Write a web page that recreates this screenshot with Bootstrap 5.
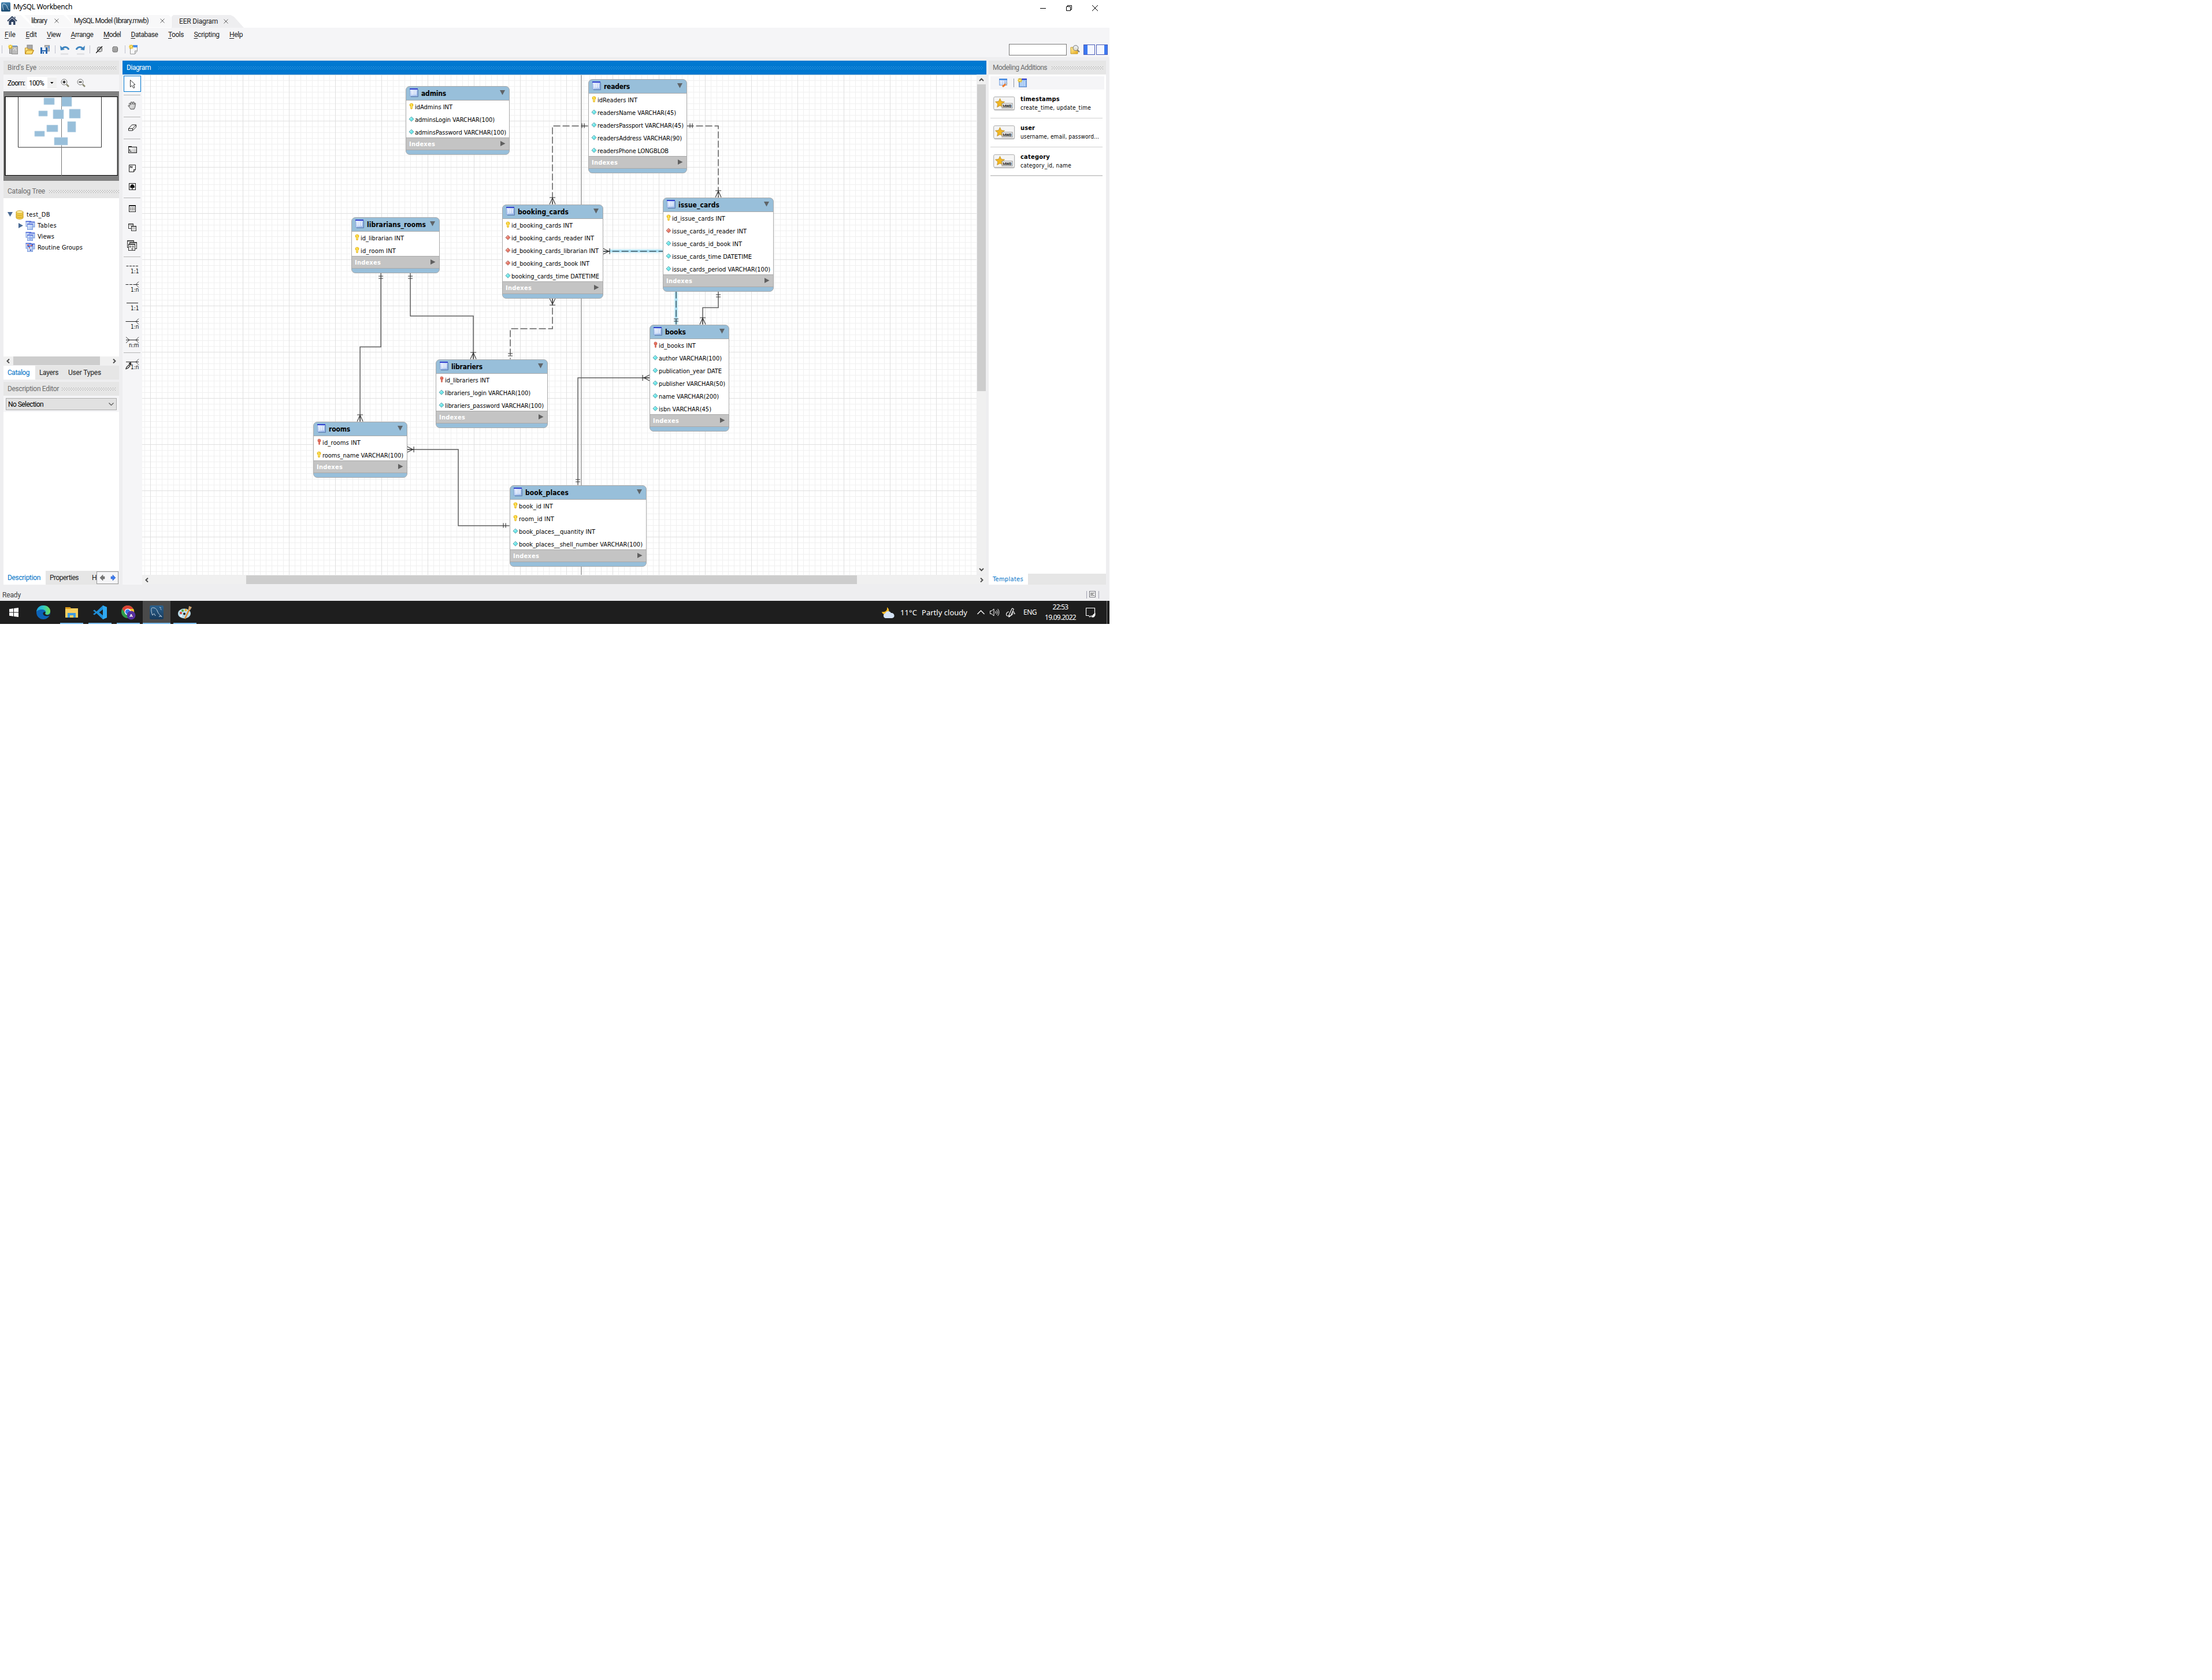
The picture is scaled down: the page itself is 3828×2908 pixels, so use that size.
<!DOCTYPE html>
<html lang="en">
<head>
<meta charset="utf-8">
<title>MySQL Workbench</title>
<link href="https://cdn.jsdelivr.net/npm/bootstrap@5.3.0/dist/css/bootstrap.min.css" rel="stylesheet">
<style>
body{background:#fff;font:12px/16px Roboto,"Liberation Sans",sans-serif;color:#1c1c1c;overflow:hidden}
svg{display:block;flex:none}
.wb{width:1920px;height:1080px;background:#eeeef0}
[data-w]{display:inline-block;white-space:nowrap;flex:none}
.tah{font-family:"DejaVu Sans Condensed","DejaVu Sans",sans-serif;font-size:11px}
/* window frame */
.titlebar{height:26px;padding:0 20px 2px 2px}
.titlebar .ttl{font:12px/16px "Noto Sans",sans-serif;color:#000;margin-left:5px}
.wbtns{gap:35px;padding-top:4px}
.tabstrip{height:22px;background:#fff}
.wtab{background:#f8f8f9;height:21px;padding-bottom:1px}
.wt-home{width:57px;padding-left:12px;clip-path:polygon(0 0,36px 0,57px 100%,0 100%)}
.wt-lib{width:89px;margin-left:-15px;padding-left:12px;clip-path:polygon(0 0,68px 0,89px 100%,19px 100%);gap:13px}
.wt-model{width:181px;margin-left:-16px;padding-left:13px;gap:20px;clip-path:polygon(0 0,177px 0,181px 4px,181px 100%,15px 100%)}
.wt-eer{width:125px;height:22px;margin-left:1px;padding-left:13px;gap:10px;background:#eeeef0;clip-path:polygon(0 3px,3px 0,102px 0,108px 3px,125px 100%,0 100%)}
.menurow{height:25px;background:#f5f5f7;padding:0 0 1px 8px;gap:17.5px}
.menurow u{text-underline-offset:2px}
.toolrow{height:26px;background:#f5f5f7;padding:0 3px}
.grip{width:1px;height:14px;background:repeating-linear-gradient(#8c8fa5 0 1px,transparent 1px 2px)}
.findbox{width:100px;height:20px;border:1px solid #7a7a7a;background:#fff;padding:0;border-radius:0}
.t-new{margin-left:10px}.t-open{margin-left:10px}.t-save{margin-left:9px}.t-undo{margin-left:8px}.t-redo{margin-left:11px}
.t-grid{margin-left:10px}.t-snap{margin-left:16px}.t-page{margin-left:6px}
/* docked panels */
.workrow{height:907px;margin-top:6px;padding-left:6px}
.side{width:200px}
.dockhead{height:24px;background:#e6e6e6;color:#6d6d6d;padding:0 5px 0 7px;gap:5px}
.dots{height:5px;flex:1;background:radial-gradient(circle at .5px .5px,#999 .7px,transparent .8px) 0 0/4px 4px,radial-gradient(circle at .5px .5px,#999 .7px,transparent .8px) 2px 2px/4px 4px}
.blue .dots{background:radial-gradient(circle at .5px .5px,#4ea6e6 .7px,transparent .8px) 0 0/4px 4px,radial-gradient(circle at .5px .5px,#4ea6e6 .7px,transparent .8px) 2px 2px/4px 4px}
.dockhead.blue{background:#0078d0;color:#fff;gap:13px}
.zoomrow{height:29px;background:#f5f5f7;padding-left:7px;color:#000}
.zoombox{width:51px;height:21px;background:#fff;margin-left:4px;padding-left:3px}
.zoombtn{width:16px;height:19px;background:#f0f0f0}
.birds{height:155px;background:#808080}
.tree{height:274px;background:#fff;padding:19px 0 0 7px;color:#000}
.tree>div{height:19px}
.tree span{padding-top:1px}
.dtab{height:24px;background:#e6e6e6}
.dtab .on{background:#fff;color:#0072c6;height:100%}
.hs{height:15px;background:#f0f0f0}
.selrow{height:28px;background:#f5f5f7;padding:4px 4px 0}
.selbox{height:21px;border:1px solid #adadad;background:#e1e1e1;padding:0 4px 0 3px;color:#000}
.descarea{height:275px;background:#fff}
.pager{width:38px;height:22px;border:1px solid #999;background:#f5f5f7;gap:9px;margin-right:1px}
.centerpane{width:1495px;margin-left:6px}
.palette{width:34px;height:883px;background:#f5f5f7}
.canvas{width:1444px;height:866px;border-top:1px solid #b8c8d4;background-color:#fff;
 background-image:linear-gradient(90deg,#e0e0e0 1px,transparent 1px),linear-gradient(#e0e0e0 1px,transparent 1px),linear-gradient(90deg,#f0f0f0 1px,transparent 1px),linear-gradient(#f0f0f0 1px,transparent 1px);
 background-size:80px 80px,80px 80px,10px 10px,10px 10px;background-position:14px 0,0 79px,4px 0,0 9px}
.vs{width:15px;height:865px;background:#f0f0f0;margin-left:1px}
.vs i{display:block;width:15px;height:531px;background:#cdcdcd}
.rightpane{width:203px;height:907px;margin-left:4px;background:#fff}
.tplbar{height:23px;margin:3px 3px 0;background:#f5f5f7;padding-left:14px;gap:9px}
.tpl{height:50px;margin:0 6px 0 3px;padding-left:5px;border-bottom:1px solid #d0d0d0;gap:9px;color:#000}
.tpl b{font-size:11px;line-height:15px}
.tpl span{font-size:10px;line-height:16px}
/* diagram nodes */
.node{position:absolute;border:1px solid #a9a9a9;border-radius:7px;background:#98bfda;overflow:hidden;color:#000}
.node header{height:24px;padding:0 6px 1px 6px;border-bottom:1px solid #a9a9a9}
.node header b{font-size:12px;margin:2px 0 0 5px}
.node header svg{margin-top:-1px}
.node ul{background:#fff;height:auto;margin:0 -1px;padding:0 0 0 4px;list-style:none;border:solid #808080;border-width:0 1px}
.node li{height:22px;padding-top:2px;display:flex;align-items:center;margin-bottom:0}
.node li:last-child{height:20px;padding-top:4px}
.node li svg{margin:-5px 1px 0 0}
.node footer{height:22px;background:#c4c4c4;border:solid #a9a9a9;border-width:1px 0;padding:1px 6px 0 5px;color:#fff;font-weight:bold}
.node footer svg{margin-top:-1px}
#n-admins{left:456px;top:19px;width:180px}
#n-lr{left:362px;top:246px;width:153px}
#n-bc{left:623px;top:224px;width:175px}
#n-rd{left:772px;top:7px;width:171px}
#n-ic{left:901px;top:212px;width:192px}
#n-lb{left:508px;top:492px;width:194px}
#n-rm{left:296px;top:600px;width:163px}
#n-bk{left:878px;top:432px;width:138px}
#n-bp{left:636px;top:710px;width:237px}
.node::after{content:"";display:block;height:7px}
.wires{position:absolute;left:0;top:0}
/* status and taskbar */
.statusrow{height:28px;padding:6px 17px 0 4px;color:#444}
.taskbar{height:40px;background:#1e1e1e;color:#fff;font-family:"Noto Sans",sans-serif}
.app-b{height:40px;width:40px;border-bottom:2px solid #76b9ed;padding-top:1px}
.app-n{border-color:transparent}
.app-on{width:48px;background:#4a4a4a}
</style>
<script src="https://cdn.jsdelivr.net/npm/bootstrap@5.3.0/dist/js/bootstrap.bundle.min.js"></script>
</head>
<body>
<svg width="0" height="0" class="position-absolute">
<defs>
<linearGradient id="gt" x2="1" y2="1"><stop stop-color="#e8f0ff"/><stop offset="1" stop-color="#a0bcec"/></linearGradient>
<linearGradient id="gy" x2="1" y2="1"><stop stop-color="#fff0a0"/><stop offset="1" stop-color="#e8a818"/></linearGradient>
<linearGradient id="gg" x2="1" y2="1"><stop stop-color="#fff"/><stop offset="1" stop-color="#b8b8b8"/></linearGradient>
<linearGradient id="gb" x2="0" y2="1"><stop stop-color="#4482ae"/><stop offset="1" stop-color="#1c4a70"/></linearGradient>
<linearGradient id="gd" x2="0" y2="1"><stop stop-color="#2c608c"/><stop offset="1" stop-color="#173a5c"/></linearGradient>
<linearGradient id="ge" x2="1" y2="0"><stop stop-color="#1a9fe0"/><stop offset=".5" stop-color="#30c8c0"/><stop offset="1" stop-color="#70e050"/></linearGradient>
<symbol id="i-tbl" viewBox="0 0 15 15"><path d="M2 14.500h12.500V2" stroke="#5d7fae" fill="none"/><rect x=".5" y=".5" width="13" height="13" fill="url(#gt)" stroke="#8aa8dc"/><path d="M0 1h14" stroke="#2f3fd0" stroke-width="2"/><path d="M4.500 4v7M7.500 4v7M10.500 4v7" stroke="#fff" stroke-width="1.200"/></symbol>
<symbol id="i-key" viewBox="0 0 9 12"><path d="M3 1h3l1.500 1.500v2.500L6 6.500V10l-1.500 1L3 10V6.500L1.500 5V2.500z" fill="#f5cb23" stroke="#d9a514" stroke-width=".5"/><path d="M3 2.500h1.500V9" stroke="#fff3a0" fill="none"/></symbol>
<symbol id="i-rkey" viewBox="0 0 9 12"><path d="M3.500 1h2.500l1.500 1.500v2.500L6 6.500V10l-1 1-1-1V6.500L2.500 5V2.500z" fill="#e06a58" stroke="#b84838" stroke-width=".5"/><path d="M4 2.500h1" stroke="#ffc0b0"/></symbol>
<symbol id="i-dia" viewBox="0 0 9 12"><path d="M4.500 2.200 8.500 6.200l-4 4-4-4z" fill="#6fe8ea" stroke="#5a9ea8"/><path d="M4.500 4 2.500 6" stroke="#e0ffff"/></symbol>
<symbol id="i-red" viewBox="0 0 9 12"><path d="M4.500 2.200 8.500 6.200l-4 4-4-4z" fill="#e87868" stroke="#a8746c"/><path d="M4.500 4 2.500 6" stroke="#ffd8d0"/></symbol>
<symbol id="i-dn" viewBox="0 0 10 9"><path d="M0 0h9L4.500 8.500z" fill="#5f6468"/></symbol>
<symbol id="i-rt" viewBox="0 0 9 10"><path d="M0 0v9L8.500 4.500z" fill="#606060"/></symbol>
<symbol id="i-x" viewBox="0 0 8 8"><path d="M.5.5l7 7M7.500.5l-7 7" stroke="#606060" fill="none"/></symbol>
<symbol id="i-star" viewBox="0 0 8 8"><path d="M4 0v8M0 4h8M1 1l6 6M7 1 1 7" stroke="#eec21c" stroke-width="1.300"/><rect x="3" y="3" width="2" height="2" fill="#fff8c0"/></symbol>
<symbol id="i-stack" viewBox="0 0 17 17"><g stroke="#7f9ddc" fill="url(#gt)"><rect x="1" y="1" width="9" height="9"/><rect x="7" y="2" width="9" height="9"/><rect x="3.500" y="5.500" width="9" height="10"/></g><path d="M.5 1.500h9M7 2.500h9M3 6h10" stroke="#4a63d8" stroke-width="1.500"/></symbol>
<symbol id="i-mwb" viewBox="0 0 38 25"><rect x="1" y="1.500" width="36" height="23" rx="2.500" fill="#ccc"/><rect x=".7" y=".7" width="36" height="22" rx="2" fill="#f5f5f5" stroke="#a8a8a8"/><path d="M11.500 3.500l2.300 5 5.700.7-4.200 3.700 1 5.600-4.800-2.700-4.800 2.700 1-5.600-4.200-3.700 5.700-.7z" fill="#f2b822" stroke="#b8892c" stroke-width=".8"/><rect x="15" y="12" width="18" height="8" fill="#fff" stroke="#888"/><text x="16.200" y="18.800" font-family="Roboto,sans-serif" font-weight="900" font-size="7" textLength="15.500" fill="#444">MWB</text></symbol>
<filter id="soft" filterUnits="userSpaceOnUse" x="1000" y="400" width="250" height="200"><feGaussianBlur stdDeviation="1"/></filter>
</defs>
</svg>

<div class="wb d-flex flex-column">
<div class="titlebar bg-white d-flex align-items-center">
 <svg width="16" height="16" viewBox="0 0 24 24"><rect width="24" height="24" rx="2.500" fill="url(#gb)"/><path d="M6 20C4 13 2 4 6 4c4 0 7 2 9 6 1 3 1 5 3 7l3 3" fill="none" stroke="#d6e6f0" stroke-width="1.400"/></svg><span class="ttl" data-w="102">MySQL Workbench</span>
 <div class="wbtns d-flex ms-auto">
  <svg width="10" height="10"><path d="M0 5.500h10" stroke="#000"/></svg>
  <svg width="10" height="10" fill="none" stroke="#000"><path d="M.5 2.500h7v7h-7zM2.500 2.500v-2h7v7h-2"/></svg>
  <svg width="10" height="10"><path d="M0 0l10 10M10 0 0 10" stroke="#000"/></svg>
 </div>
</div>
<div class="tabstrip d-flex">
 <div class="wtab wt-home d-flex align-items-center"><svg width="18" height="16"><path d="M1 8.500 9 1l8 7.500" fill="none" stroke="#3a4a66" stroke-width="2.200"/><path d="M12.500 1h2v4M3.500 8.500 9 3.500l5.500 5V15H11v-5H7.500v5h-4z" fill="#2f4262"/></svg></div>
 <div class="wtab wt-lib d-flex align-items-center"><span data-w="27">library</span><svg width="8" height="8"><use href="#i-x"/></svg></div>
 <div class="wtab wt-model d-flex align-items-center"><span data-w="129">MySQL Model (library.mwb)</span><svg width="8" height="8"><use href="#i-x"/></svg></div>
 <div class="wtab wt-eer d-flex align-items-center"><span data-w="67">EER Diagram</span><svg width="8" height="8"><use href="#i-x"/></svg></div>
</div>
<div class="menurow d-flex align-items-center">
 <span data-w="19"><u>F</u>ile</span><span data-w="19"><u>E</u>dit</span><span data-w="24"><u>V</u>iew</span><span data-w="39"><u>A</u>rrange</span><span data-w="30"><u>M</u>odel</span><span data-w="47"><u>D</u>atabase</span><span data-w="27"><u>T</u>ools</span><span data-w="44"><u>S</u>cripting</span><span data-w="23"><u>H</u>elp</span>
</div>
<div class="toolrow d-flex align-items-center">
 <div class="grip"></div>
 <svg width="18" height="18" class="t-new"><rect x="7" y="2" width="9" height="12" fill="#4a90e0"/><rect x="2.500" y="6.500" width="10" height="9" fill="#b8b8b8" stroke="#888"/><rect x="6.500" y="3.500" width="10" height="13" fill="#bcbcbc" stroke="#909090"/><path d="M9 10l3-4 2 5" stroke="#eee" fill="none"/><svg width="8" height="8"><use href="#i-star"/></svg></svg>
 <svg width="18" height="18" class="t-open"><rect x="5" y="1" width="9" height="8" fill="#a8a8a8" stroke="#888"/><path d="M1.500 16V6h4l1 2h7v2h3l-3 6.500z" fill="url(#gy)" stroke="#c08c1c"/><path d="M4 10h12l-3 6.500H2z" fill="#fbdc6c" stroke="#c08c1c"/></svg>
 <svg width="18" height="18" class="t-save"><rect x="8.500" y="1.500" width="8" height="10" fill="#b8b8b8" stroke="#909090"/><path d="M14 3h3v5" fill="#4a90e0"/><path d="M1 5h11l1 1v10H1z" fill="#2463ae"/><rect x="4" y="5" width="6" height="5" fill="#e4ecf6"/><rect x="4" y="12" width="6" height="4" fill="#fff"/><rect x="5" y="13" width="2" height="3" fill="#2463ae"/></svg>
 <div class="grip ms-2"></div>
 <svg width="16" height="18" class="t-undo"><path d="M4 7c3-4 9-3 11 2" fill="none" stroke="#3d84bf" stroke-width="3"/><path d="M0 2l1 8 7-1z" fill="#3d84bf"/><path d="M1 16.500h13" stroke="#dcdcdf" stroke-width="2"/></svg>
 <svg width="16" height="18" class="t-redo"><path d="M12 7C9 3 3 4 1 9" fill="none" stroke="#3d84bf" stroke-width="3"/><path d="M16 2l-1 8-7-1z" fill="#3d84bf"/><path d="M2 16.500h13" stroke="#dcdcdf" stroke-width="2"/></svg>
 <div class="grip ms-2"></div>
 <svg width="12" height="12" class="t-grid"><rect x="2.500" y="1.500" width="8" height="8" rx="2" fill="#ccc" stroke="#222" stroke-dasharray="1.500 .7"/><path d="M0 12 11 0" stroke="#111" stroke-width="1.300"/></svg>
 <svg width="11" height="12" class="t-snap"><rect x="1" y="1" width="8.500" height="9" rx="2" fill="#bbb" stroke="#222" stroke-dasharray="1.500 .7"/><path d="M3 4h5M3 6h5M3 8h5" stroke="#555" stroke-dasharray="1 1"/></svg>
 <div class="grip" style="margin-left:11px"></div>
 <svg width="16" height="18" class="t-page"><path d="M2.500 2.500h12v9l-4 5h-8z" fill="#f7f7f8" stroke="#999"/><path d="M6 1h9v4H2V4h4z" fill="#4a8ee8"/><path d="M14.500 11h-4v5" fill="#ddd" stroke="#999"/><svg width="8" height="8"><use href="#i-star"/></svg></svg>
 <input class="findbox ms-auto" aria-label="Search">
 <svg width="18" height="18" style="margin-left:5px"><path d="M2 16V5h5l1 2h6v9z" fill="url(#gy)" stroke="#c59a25"/><circle cx="10.500" cy="6" r="4.500" fill="#e4e8ea" fill-opacity=".85" stroke="#777"/><path d="M13.500 9.500 17 13" stroke="#777" stroke-width="2"/></svg>
 <svg width="42" height="18" style="margin-left:6px"><g fill="#f5f7ff" stroke="#4a5cb8"><rect x=".5" y=".5" width="19" height="17"/><rect x="22.500" y=".5" width="19" height="17"/></g><path d="M1 1h6v16H1zM36 1h5v16h-5z" fill="#3c78f0"/></svg>
</div>

<div class="workrow d-flex align-items-start">
<aside class="side d-flex flex-column">
 <div class="dockhead d-flex align-items-center"><span data-w="50">Bird's Eye</span><div class="dots"></div></div>
 <div class="zoomrow d-flex align-items-center"><span data-w="30">Zoom:</span>
  <div class="zoombox d-flex align-items-center"><span data-w="26">100%</span><div class="zoombtn ms-auto d-flex align-items-center justify-content-center"><svg width="6" height="4"><path d="M0 0h5.500L2.800 3z" fill="#000"/></svg></div></div>
  <svg width="16" height="16" style="margin-left:7px" fill="none"><circle cx="6" cy="6" r="5" fill="#f2f2f2" stroke="#808080"/><path d="M10 10l4 4" stroke="#8a8a70" stroke-width="2.500"/><path d="M3.500 6h5M6 3.500v5" stroke="#000" stroke-width="1.500"/></svg>
  <svg width="16" height="16" style="margin-left:12px" fill="none"><circle cx="6" cy="6" r="5" fill="#f2f2f2" stroke="#808080"/><path d="M10 10l4 4" stroke="#8a8a70" stroke-width="2.500"/><path d="M3.500 6h5" stroke="#000" stroke-width="1.500"/></svg>
 </div>
 <svg class="birds" width="200" height="155"><rect x="2.500" y="9.500" width="195" height="136" fill="#fff" stroke="#000"/><path d="M197 10v135M3.500 10v135" stroke="#555"/><path d="M25.500 10v87h144V10" fill="none" stroke="#333"/><path d="M100.500 10v136" stroke="#777"/><g fill="#98bfda" stroke="#b8d2e4" stroke-width=".8"><path d="M70 11.500h18v11.500H70zM101 10h17v16h-17zM61 34h15v9H61zM86 32h18v15.500H86zM114 31h19v15.500h-19zM111 52.500h14v18h-14zM75 58.500h19v11.500H75zM54 69h17v9H54zM88 80h23v13H88z"/></g></svg>
 <div class="dockhead d-flex align-items-center pe-0" style="height:30px;gap:7px;padding-top:6px"><span data-w="65">Catalog Tree</span><div class="dots"></div></div>
 <div class="tree tah">
  <div class="d-flex align-items-center"><svg width="10" height="9"><path d="M0 0h9L4.500 8z" fill="#4a6a95"/></svg><svg width="14" height="16" class="ms-1"><path d="M1 3v10c0 3 12 3 12 0V3z" fill="#f4d04a" stroke="#c89c24"/><ellipse cx="7" cy="3" rx="6" ry="2.300" fill="#fff0a0" stroke="#c89c24"/><path d="M1 7c1 2.500 11 2.500 12 0M1 10.500c1 2.500 11 2.500 12 0" fill="none" stroke="#c89c24"/></svg><span data-w="41" style="margin-left:5px">test_DB</span></div>
  <div class="d-flex align-items-center" style="padding-left:19px"><svg width="8" height="9"><path d="M0 0v9l8-4.500z" fill="#4a6a95"/></svg><svg width="17" height="17" class="ms-1"><use href="#i-stack"/></svg><span data-w="33" style="margin-left:4px">Tables</span></div>
  <div class="d-flex align-items-center" style="padding-left:31px"><svg width="17" height="17"><use href="#i-stack"/><circle cx="8" cy="11" r="2" fill="none" stroke="#6a8ae8"/></svg><span data-w="29" style="margin-left:4px">Views</span></div>
  <div class="d-flex align-items-center" style="padding-left:31px"><svg width="17" height="17"><use href="#i-stack"/><path d="M3 4h3M9 5h3M6 9h2" stroke="#d86858" stroke-width="2"/><path d="M5 7h2M11 4h2M8 13h2" stroke="#3a5ac0" stroke-width="2"/></svg><span data-w="78" style="margin-left:4px">Routine Groups</span></div>
 </div>
 <div class="hs d-flex align-items-center" style="padding:0 5px 0 5px"><svg width="6" height="8"><path d="M5 .5 1.500 4 5 7.500" fill="none" stroke="#505050" stroke-width="2"/></svg><div style="width:150px;height:15px;margin-left:6px;background:#cdcdcd"></div><svg width="6" height="8" class="ms-auto"><path d="M1 .5 4.500 4 1 7.500" fill="none" stroke="#505050" stroke-width="2"/></svg></div>
 <div class="dtab d-flex align-items-center" style="margin-top:1px"><div class="on d-flex align-items-center" style="width:55px;padding-left:7px"><span data-w="38">Catalog</span></div><span data-w="33" style="margin-left:7px">Layers</span><span data-w="57" style="margin-left:17px">User Types</span></div>
 <div class="dockhead d-flex align-items-center" style="margin-top:4px"><span data-w="89">Description Editor</span><div class="dots"></div></div>
 <div class="selrow"><div class="selbox d-flex align-items-center justify-content-between"><span data-w="61">No Selection</span><svg width="9" height="6"><path d="M.5.5l4 4 4-4" fill="none" stroke="#555" stroke-width="1.200"/></svg></div></div>
 <div class="descarea"></div>
 <div class="dtab d-flex align-items-center"><div class="on d-flex align-items-center" style="width:73px;padding-left:7px"><span data-w="57">Description</span></div><span data-w="50" style="margin-left:7px">Properties</span><span data-w="8" style="margin-left:23px">H</span>
  <div class="pager d-flex align-items-center justify-content-center ms-auto"><svg width="9" height="12"><path d="M0 6l5-5v3h3v4H5v3z" fill="#787878" stroke="#555" stroke-width=".5"/></svg><svg width="9" height="12"><path d="M9 6 4 1v3H1v4h3v3z" fill="#3c7cf0" stroke="#2850b0" stroke-width=".5"/></svg></div></div>
</aside>

<main class="centerpane">
 <div class="dockhead blue d-flex align-items-center"><span data-w="42">Diagram</span><div class="dots"></div></div>
 <div class="d-flex">
  <svg class="palette" width="34" height="883" fill="none">
   <rect x="2.500" y="2.500" width="29" height="27" fill="#fdfdfe" stroke="#0078d0"/>
   <path d="M2 35.500h29M2 73.500h29M2 111.500h29M2 213.500h29M2 315.500h29M2 481.500h29" stroke="#b5b5b5"/>
   <path d="M13.500 9.500v12l3-2.500 2.500 4.500 2-1-2-4.500 3-.5z" fill="#fff" stroke="#333"/>
   <path d="M14 60c-1-3-5-5-4-6.500l2.500 1.500-1-5 1.500-.8 1.500 3.500v-5h2l.7 4 1-4.300 1.800.3v4.500l1.300-3 1.400.8-1 6.500-1.700 3.500z" fill="url(#gg)" stroke="#444" stroke-width=".9"/>
   <path d="M10.500 93.500l6-6.500h7l-6 6.500zM10.500 93.500v3.500h7v-3.500M17.500 97l6-6v-4" fill="#f4f4f4" stroke="#222"/>
   <rect x="10.500" y="125.500" width="14" height="10" fill="url(#gg)" stroke="#222"/><path d="M10 124h6v2h-6z" fill="#222"/><path d="M12.500 129v4h3" stroke="#222"/>
   <path d="M11.500 156.500h11v8l-3 4h-8z" fill="#f4f4f4" stroke="#222"/><path d="M22.500 164.500h-3v4M13.500 162v-4l3 4v-4" stroke="#222"/>
   <rect x="11.500" y="188.500" width="11" height="11" fill="#eee" stroke="#222"/><path d="M17 190l2.500 1.500 1.500 3-1 1.500h-6l-1-1.500 1.500-3zM16.500 195h1v3.500h-1z" fill="#111" stroke="#111" stroke-width=".4"/>
   <rect x="11.500" y="226.500" width="11" height="11" fill="#f4f4f4" stroke="#222"/><path d="M11 227.500h12" stroke="#222"/><path d="M13 230.500h8M13 232.500h8M13 234.500h8" stroke="#444" stroke-dasharray="2 1"/>
   <g fill="#f4f4f4" stroke="#333"><rect x="10.500" y="258.500" width="8" height="8"/><rect x="15.500" y="262.500" width="8" height="8"/></g><path d="M10 259h9M15 263h9" stroke="#222"/><path d="M12 261.500h5M17 265.500h5M17 267.500h5" stroke="#555" stroke-dasharray="1 1"/>
   <g fill="#eee" stroke="#333"><rect x="8.500" y="287.500" width="11" height="12"/><rect x="12.500" y="290.500" width="12" height="11"/><rect x="10.500" y="293.500" width="11" height="11"/></g><path d="M8 288h12M12 291h13M10 294h12" stroke="#333" stroke-width="1.500"/><path d="M12.500 297h2v2h-2zM17 297h2v2h-2zM16 301h2v2h-2z" stroke="#444" stroke-width=".8"/>
   <g stroke="#222"><path d="M6.500 331.500H27" stroke-dasharray="4 1.500"/><path d="M5.500 363.500H22" stroke-dasharray="5 1.500"/><path d="M7 395.500h20M5.500 427.500H28M6 459.500h22M6 497.500h22"/><path d="M28 358.500l-5 5 5 5M22 363.500h6M28 422.500l-5 5 5 5M28 454.500l-5 5 5 5M6 454.500l6 5-6 5M28 492.500l-5 5 5 5" stroke-width=".9"/><path d="M6 509.500l1-3 4-4 2 2-4 4zM12 500l3 3" stroke-width="1.200"/><path d="M11 500l3-1.500 1 1-1.500 3.500z" fill="#222"/></g>
   <g fill="#111" font-family="DejaVu Sans Condensed,sans-serif" font-size="10" text-anchor="end"><text x="28.500" y="344">1:1</text><text x="28.500" y="376">1:n</text><text x="28.500" y="408">1:1</text><text x="28.500" y="440">1:n</text><text x="28.500" y="472">n:m</text><text x="28.500" y="510">1:n</text></g>
  </svg>
  <div>
   <div class="d-flex">
    <div class="canvas position-relative">
     <svg class="wires" width="1444" height="865" fill="none">
      <path d="M760 0v865" stroke="#b4b4b4" stroke-width="2"/>
      <g transform="translate(-246.400 -130.500)">
       <path d="M1055 435H1148M1170.500 505V562" stroke="#a4dff5" stroke-width="5" filter="url(#soft)"/>
       <g stroke="#5f5f5f" stroke-width="1.500">
        <path d="M659.500 473V601H623.500V730M710.500 473V547.500H819.500V622M705 778.500H793.500V910.500H882M1124.500 654.500H1000.500V840M1243.500 505V533H1216.500V562"/>
        <path stroke-dasharray="12 4" d="M1018 218.500H956.500V354M1189 218.500H1243.500V342M956.500 517V569.500H883.500V622"/>
        <path stroke-dasharray="12 4" stroke="#3c5560" d="M1044 435.500H1148M1170.500 505V562"/>
       </g>
       <g stroke="#333" stroke-width="1.100">
        <path d="M655.500 478.500h8M655.500 482.500h8M706.500 478.500h8M706.500 482.500h8M1239.500 510.500h8M1239.500 514.500h8M879.500 612.500h8M879.500 616.500h8M996.500 830.500h8M996.500 834.500h8M1166.500 552.500h8M1166.500 556.500h8M1007.500 214v8M1011.500 214v8M1194.500 214v8M1198.500 214v8M871.500 906v8M875.500 906v8"/>
        <path d="M618.500 718.500h10M623.500 718.500V730M618.500 730l5-11 5 11M814.500 610.500h10M819.500 610.500V622M814.500 622l5-11 5 11M951.500 342.500h10M956.500 342.500V354M951.500 354l5-11 5 11M1238.500 330.500h10M1243.500 330.500V342M1238.500 342l5-11 5 11M1211.500 550.500h10M1216.500 550.500V562M1211.500 562l5-11 5 11M951.500 528.500h10M956.500 517v11M951.500 517l5 10 5-10M716.500 773.500v10M705 778.500h11M705 773.500l10 5-10 5M1055.500 430.500v10M1044 435.500h11M1044 430.500l10 5-10 5M1112.500 649.500v10M1124 654.500h-12M1124.500 649.500l-10 5 10 5"/>
       </g>
      </g>
     </svg>
     <section class="node tah" id="n-admins"><header class="d-flex align-items-center"><svg width="15" height="15"><use href="#i-tbl"/></svg><b data-w="43">admins</b><svg width="10" height="9" class="ms-auto"><use href="#i-dn"/></svg></header>
      <ul><li><svg width="10" height="12"><use href="#i-key"/></svg><span data-w="65">idAdmins INT</span></li><li><svg width="10" height="12"><use href="#i-dia"/></svg><span data-w="138">adminsLogin VARCHAR(100)</span></li><li><svg width="10" height="12"><use href="#i-dia"/></svg><span data-w="158">adminsPassword VARCHAR(100)</span></li></ul>
      <footer class="d-flex align-items-center justify-content-between"><span data-w="45">Indexes</span><svg width="9" height="10"><use href="#i-rt"/></svg></footer></section>
     <section class="node tah" id="n-lr"><header class="d-flex align-items-center"><svg width="15" height="15"><use href="#i-tbl"/></svg><b data-w="102">librarians_rooms</b><svg width="10" height="9" class="ms-auto"><use href="#i-dn"/></svg></header>
      <ul><li><svg width="10" height="12"><use href="#i-key"/></svg><span data-w="75">id_librarian INT</span></li><li><svg width="10" height="12"><use href="#i-key"/></svg><span data-w="61">id_room INT</span></li></ul>
      <footer class="d-flex align-items-center justify-content-between"><span data-w="45">Indexes</span><svg width="9" height="10"><use href="#i-rt"/></svg></footer></section>
     <section class="node tah" id="n-bc"><header class="d-flex align-items-center"><svg width="15" height="15"><use href="#i-tbl"/></svg><b data-w="88">booking_cards</b><svg width="10" height="9" class="ms-auto"><use href="#i-dn"/></svg></header>
      <ul><li><svg width="10" height="12"><use href="#i-key"/></svg><span data-w="106">id_booking_cards INT</span></li><li><svg width="10" height="12"><use href="#i-red"/></svg><span data-w="143">id_booking_cards_reader INT</span></li><li><svg width="10" height="12"><use href="#i-red"/></svg><span data-w="151">id_booking_cards_librarian INT</span></li><li><svg width="10" height="12"><use href="#i-red"/></svg><span data-w="135">id_booking_cards_book INT</span></li><li><svg width="10" height="12"><use href="#i-dia"/></svg><span data-w="152">booking_cards_time DATETIME</span></li></ul>
      <footer class="d-flex align-items-center justify-content-between"><span data-w="45">Indexes</span><svg width="9" height="10"><use href="#i-rt"/></svg></footer></section>
     <section class="node tah" id="n-rd"><header class="d-flex align-items-center"><svg width="15" height="15"><use href="#i-tbl"/></svg><b data-w="45">readers</b><svg width="10" height="9" class="ms-auto"><use href="#i-dn"/></svg></header>
      <ul><li><svg width="10" height="12"><use href="#i-key"/></svg><span data-w="69">idReaders INT</span></li><li><svg width="10" height="12"><use href="#i-dia"/></svg><span data-w="136">readersName VARCHAR(45)</span></li><li><svg width="10" height="12"><use href="#i-dia"/></svg><span data-w="149">readersPassport VARCHAR(45)</span></li><li><svg width="10" height="12"><use href="#i-dia"/></svg><span data-w="146">readersAddress VARCHAR(90)</span></li><li><svg width="10" height="12"><use href="#i-dia"/></svg><span data-w="123">readersPhone LONGBLOB</span></li></ul>
      <footer class="d-flex align-items-center justify-content-between"><span data-w="45">Indexes</span><svg width="9" height="10"><use href="#i-rt"/></svg></footer></section>
     <section class="node tah" id="n-ic"><header class="d-flex align-items-center"><svg width="15" height="15"><use href="#i-tbl"/></svg><b data-w="71">issue_cards</b><svg width="10" height="9" class="ms-auto"><use href="#i-dn"/></svg></header>
      <ul><li><svg width="10" height="12"><use href="#i-key"/></svg><span data-w="92">id_issue_cards INT</span></li><li><svg width="10" height="12"><use href="#i-red"/></svg><span data-w="129">issue_cards_id_reader INT</span></li><li><svg width="10" height="12"><use href="#i-dia"/></svg><span data-w="121">issue_cards_id_book INT</span></li><li><svg width="10" height="12"><use href="#i-dia"/></svg><span data-w="138">issue_cards_time DATETIME</span></li><li><svg width="10" height="12"><use href="#i-dia"/></svg><span data-w="170">issue_cards_period VARCHAR(100)</span></li></ul>
      <footer class="d-flex align-items-center justify-content-between"><span data-w="45">Indexes</span><svg width="9" height="10"><use href="#i-rt"/></svg></footer></section>
     <section class="node tah" id="n-lb"><header class="d-flex align-items-center"><svg width="15" height="15"><use href="#i-tbl"/></svg><b data-w="54">librariers</b><svg width="10" height="9" class="ms-auto"><use href="#i-dn"/></svg></header>
      <ul><li><svg width="10" height="12"><use href="#i-rkey"/></svg><span data-w="77">id_librariers INT</span></li><li><svg width="10" height="12"><use href="#i-dia"/></svg><span data-w="148">librariers_login VARCHAR(100)</span></li><li><svg width="10" height="12"><use href="#i-dia"/></svg><span data-w="171">librariers_password VARCHAR(100)</span></li></ul>
      <footer class="d-flex align-items-center justify-content-between"><span data-w="45">Indexes</span><svg width="9" height="10"><use href="#i-rt"/></svg></footer></section>
     <section class="node tah" id="n-rm"><header class="d-flex align-items-center"><svg width="15" height="15"><use href="#i-tbl"/></svg><b data-w="37">rooms</b><svg width="10" height="9" class="ms-auto"><use href="#i-dn"/></svg></header>
      <ul><li><svg width="10" height="12"><use href="#i-rkey"/></svg><span data-w="66">id_rooms INT</span></li><li><svg width="10" height="12"><use href="#i-key"/></svg><span data-w="140">rooms_name VARCHAR(100)</span></li></ul>
      <footer class="d-flex align-items-center justify-content-between"><span data-w="45">Indexes</span><svg width="9" height="10"><use href="#i-rt"/></svg></footer></section>
     <section class="node tah" id="n-bk"><header class="d-flex align-items-center"><svg width="15" height="15"><use href="#i-tbl"/></svg><b data-w="36">books</b><svg width="10" height="9" class="ms-auto"><use href="#i-dn"/></svg></header>
      <ul><li><svg width="10" height="12"><use href="#i-rkey"/></svg><span data-w="64">id_books INT</span></li><li><svg width="10" height="12"><use href="#i-dia"/></svg><span data-w="109">author VARCHAR(100)</span></li><li><svg width="10" height="12"><use href="#i-dia"/></svg><span data-w="109">publication_year DATE</span></li><li><svg width="10" height="12"><use href="#i-dia"/></svg><span data-w="115">publisher VARCHAR(50)</span></li><li><svg width="10" height="12"><use href="#i-dia"/></svg><span data-w="104">name VARCHAR(200)</span></li><li><svg width="10" height="12"><use href="#i-dia"/></svg><span data-w="91">isbn VARCHAR(45)</span></li></ul>
      <footer class="d-flex align-items-center justify-content-between"><span data-w="45">Indexes</span><svg width="9" height="10"><use href="#i-rt"/></svg></footer></section>
     <section class="node tah" id="n-bp"><header class="d-flex align-items-center"><svg width="15" height="15"><use href="#i-tbl"/></svg><b data-w="75">book_places</b><svg width="10" height="9" class="ms-auto"><use href="#i-dn"/></svg></header>
      <ul><li><svg width="10" height="12"><use href="#i-key"/></svg><span data-w="59">book_id INT</span></li><li><svg width="10" height="12"><use href="#i-key"/></svg><span data-w="61">room_id INT</span></li><li><svg width="10" height="12"><use href="#i-dia"/></svg><span data-w="132">book_places__quantity INT</span></li><li><svg width="10" height="12"><use href="#i-dia"/></svg><span data-w="214">book_places__shell_number VARCHAR(100)</span></li></ul>
      <footer class="d-flex align-items-center justify-content-between"><span data-w="45">Indexes</span><svg width="9" height="10"><use href="#i-rt"/></svg></footer></section>
    </div>
    <div class="vs d-flex flex-column"><svg width="15" height="17"><path d="M4 11l3.500-3.500L11 11" fill="none" stroke="#505050" stroke-width="2"/></svg><i></i><svg width="15" height="17" class="mt-auto"><path d="M4 7l3.500 3.500L11 7" fill="none" stroke="#505050" stroke-width="2"/></svg></div>
   </div>
   <div class="hs d-flex align-items-center" style="width:1461px;margin-top:1px;padding:0 5px 0 5px"><svg width="6" height="8"><path d="M5 .5 1.500 4 5 7.500" fill="none" stroke="#505050" stroke-width="2"/></svg><div style="width:1057px;height:15px;margin-left:169px;background:#cdcdcd"></div><svg width="6" height="8" class="ms-auto"><path d="M1 .5 4.500 4 1 7.500" fill="none" stroke="#505050" stroke-width="2"/></svg></div>
  </div>
 </div>
</main>

<aside class="rightpane d-flex flex-column">
 <div class="dockhead d-flex align-items-center" style="gap:8px"><span data-w="94">Modeling Additions</span><div class="dots"></div></div>
 <div class="tplbar d-flex align-items-center"><svg width="17" height="17"><rect x="1.500" y="1.500" width="13" height="11" fill="url(#gt)" stroke="#8aaee0"/><path d="M1 2.500h14" stroke="#2f7fe0" stroke-width="2"/><path d="M5 5v7M8.500 5v7" stroke="#fff"/><path d="M7 15l6-5" stroke="#f07828" stroke-width="3"/><path d="M12 11l3-3" stroke="#b8c0c8" stroke-width="3"/></svg><div style="width:1px;height:15px;background:#8c96a8"></div><svg width="17" height="17" style="margin-left:-3px"><rect x="2.500" y="1.500" width="13" height="14" fill="#8fb8ee" stroke="#5f88c8"/><path d="M7 2h9" stroke="#2a36d0" stroke-width="2"/><path d="M6 5v9M9 5v9M12 5v9" stroke="#d4e6fc" stroke-width="1.500"/><svg width="8" height="8"><use href="#i-star"/></svg></svg></div>
 <div class="tpl tah d-flex align-items-center"><svg width="38" height="25"><use href="#i-mwb"/></svg><div class="d-flex flex-column align-items-start"><b data-w="68">timestamps</b><span data-w="122">create_time, update_time</span></div></div>
 <div class="tpl tah d-flex align-items-center"><svg width="38" height="25"><use href="#i-mwb"/></svg><div class="d-flex flex-column align-items-start"><b data-w="25">user</b><span data-w="136">username, email, password...</span></div></div>
 <div class="tpl tah d-flex align-items-center" style="border-bottom-width:2px"><svg width="38" height="25"><use href="#i-mwb"/></svg><div class="d-flex flex-column align-items-start"><b data-w="51">category</b><span data-w="88">category_id, name</span></div></div>
 <div class="dtab mt-auto d-flex tah" style="height:19px"><div class="on d-flex align-items-center" style="width:68px;padding-left:7px"><span data-w="53">Templates</span></div></div>
</aside>
</div>

<div class="statusrow d-flex justify-content-between"><span data-w="32" class="pt-1">Ready</span><svg width="23" height="18"><path d="M.5 5v13M21.500 5v13" stroke="#a0a0b0"/><rect x="5.500" y="5.500" width="10" height="10" fill="#fff" stroke="#707078"/><path d="M7 8.500h7M7 10.500h5M7 12.500h7" stroke="#555"/></svg></div>

<div class="taskbar d-flex align-items-center position-relative">
 <svg width="16" height="16" style="margin:0 16px 0 16px"><path d="M0 2.300 7 1.300v6.200H0zM8 1.100 16 0v7.500H8zM0 8.500h7v6.200l-7-1zM8 8.500h8V16l-8-1.100z" fill="#fff"/></svg>
 <div class="app-b app-n d-flex align-items-center justify-content-center" style="margin-left:7px"><svg width="24" height="24"><circle cx="12" cy="12" r="12" fill="#0c63b8"/><path d="M0 11C1 3 7 0 12 0c8 0 12 5 12 10 0 4-3 6-6 6-2 0-3-1-3-2s1-1.500 1-3c0-2-3-4-6-4-5 0-9 2-10 4z" fill="url(#ge)"/><path d="M15 13.500c0 2 2 3 4 3 1.800 0 3.400-.6 4.500-1.800-.3 1.300-.7 2.200-1.300 3.100-3 1.200-8 .8-10-1.500-1.500-2-.7-4 .8-5 1.500-.3 3 .2 3 .7 0 .6-1 1-1 1.500z" fill="#1e1e1e"/></svg></div>
 <div class="app-b d-flex align-items-center justify-content-center" style="margin-left:9px"><svg width="22" height="20"><path d="M0 1h8l2 2h12v16H0z" fill="#f7cf60"/><path d="M0 1h8l2 3H0z" fill="#d99a1c"/><path d="M4 19v-8h14v8h-4v-4H8v4z" fill="#3f9ae0"/></svg></div>
 <div class="app-b d-flex align-items-center justify-content-center" style="margin-left:9px"><svg width="24" height="24"><path d="M17 0l7 3v18l-7 3L6 13.500 2.500 16.500 0 15V9l2.500-1.500L6 10.500z" fill="#1f8fd8"/><path d="M17 7v10l-6.500-5zM0 9l4 3-4 3z" fill="#1e1e1e"/><path d="M17 0l7 3v18l-7 3z" fill="#2fa8f0"/></svg></div>
 <div class="app-b d-flex align-items-center justify-content-center" style="margin-left:9px"><svg width="26" height="26"><circle cx="12" cy="12" r="11" fill="#2f9e4c"/><path d="M2.500 6.500A11 11 0 0 1 21.500 6.500L12 12z" fill="#de4335"/><path d="M12 7h10a11 11 0 0 1-9 16z" fill="#f8c32c"/><path d="M2.500 6.500 8 15l4-3V4z" fill="#de4335"/><circle cx="12" cy="12" r="5.500" fill="#fff"/><circle cx="12" cy="12" r="4.200" fill="#3a78e8"/><circle cx="18" cy="18" r="7.500" fill="#5530a0"/><text x="18" y="21" font-size="8" font-weight="bold" fill="#fff" text-anchor="middle" font-family="Roboto,sans-serif">A</text></svg></div>
 <div class="app-b app-on d-flex align-items-center justify-content-center" style="margin-left:5px"><svg width="24" height="24"><rect width="24" height="24" rx="2.500" fill="url(#gd)"/><path d="M5 17C2.500 12 2 4 4.500 4c3-.5 7 1 8.500 5 1.500 3 1.500 4.500 4 6.500l4 4-3.500-1.500-1 2M5 17l2.500-3 2.500 4M17 3l3 1.500M18.500 6l2 1.500" fill="none" stroke="#c6d6e4" stroke-width="1"/></svg></div>
 <div class="app-b d-flex align-items-center justify-content-center" style="margin-left:5px"><svg width="24" height="24"><ellipse cx="11" cy="14" rx="11" ry="8.500" fill="#b9dcea"/><circle cx="11" cy="14.500" r="2" fill="#1e1e1e"/><circle cx="5" cy="13" r="2" fill="#d84030"/><circle cx="8" cy="9" r="2" fill="#58a838"/><circle cx="13.500" cy="8" r="2" fill="#f0b020"/><circle cx="5.500" cy="18" r="1.800" fill="#f4f4ff"/><path d="M20 6l-8 17" stroke="#e08a30" stroke-width="2.500"/><path d="M18 7l1-6 5 2-3 5z" fill="#c8a070"/></svg></div>
 <div class="d-flex align-items-center ms-auto" style="padding-right:4px">
  <svg width="23" height="21"><path d="M9 1c1 6-3 9-9 8 1 5 9 7 12 1 1-4 0-7-3-9z" fill="#f5b921"/><path d="M6 20a4.500 4.500 0 0 1 0-8.500C8 7 14 7 16 11c6-1 8 8 2 9z" fill="#d4e2f5"/></svg>
  <span data-w="29" style="margin-left:9px;font-size:13px">11°C</span><span data-w="79" style="margin-left:8px;font-size:13px">Partly cloudy</span>
  <svg width="13" height="8" style="margin-left:17px"><path d="M.5 7 6.500 1l6 6" fill="none" stroke="#fff" stroke-width="1.300"/></svg>
  <svg width="17" height="14" style="margin-left:9px" fill="none" stroke="#fff"><path d="M.5 4.500h2.500L7 1v12L3 9.500H.5zM9.500 5c1 1 1 3 0 4M11.500 3c2 2 2 6 0 8M13.500 1c3 3 3 9 0 12"/></svg>
  <svg width="17" height="17" style="margin-left:11px" fill="none" stroke="#fff"><path d="M5 13 10 2c1-2 4 0 3 1L8 14l-3 2zM5 7C1 7-1 12 2 14c3 1 10-1 9-4s3-4 3-2-1 3 2 2" stroke-width="1.100"/></svg>
  <span data-w="23" style="margin-left:13px">ENG</span>
  <div class="d-flex flex-column align-items-center" style="margin-left:14px;line-height:18px"><span data-w="27">22:53</span><span data-w="54">19.09.2022</span></div>
  <svg width="17" height="17" style="margin-left:17px" fill="none" stroke="#fff"><path d="M10 13.500l-3 2.500-2-2.500H.5v-13h15V9" stroke-width="1.200"/><path d="M16 9l-4 4-2 3h4l2-3z" fill="#fff"/></svg>
  <div style="width:1px;height:40px;background:#777;margin-left:19px"></div>
 </div>
</div>
</div>
<script>
/* Spread or tighten each label so that it fills the width given in data-w. */
document.querySelectorAll('[data-w]').forEach(function(el){
  var w = +el.dataset.w, n = el.textContent.length;
  el.style.letterSpacing = ((w - el.getBoundingClientRect().width) / n) + 'px';
  el.style.width = w + 'px';
});
</script>
</body>
</html>
